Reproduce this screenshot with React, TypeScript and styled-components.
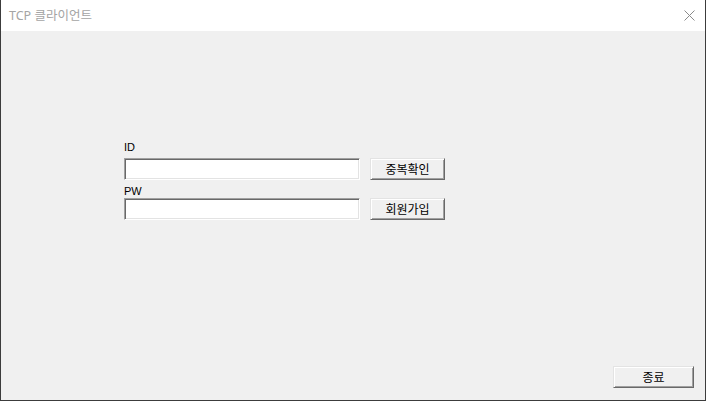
import React from "react";
import styled, { createGlobalStyle } from "styled-components";

const Global = createGlobalStyle`
  html, body { margin: 0; padding: 0; background: #f0f0f0; }
  * { box-sizing: border-box; }
`;

const Window = styled.div`
  width: 706px;
  height: 401px;
  display: flex;
  flex-direction: column;
  border-left: 1px solid #3c3c3c;
  border-right: 1px solid #3c3c3c;
  border-bottom: 1px solid #3c3c3c;
  background: #f0f0f0;
  font-family: "Noto Sans CJK KR", "Noto Sans", sans-serif;
`;

const TitleBar = styled.div`
  height: 31px;
  flex: none;
  background: #ffffff;
  display: flex;
  align-items: center;
  justify-content: space-between;
  padding: 0 10px 0 8px;
`;

const Title = styled.span`
  font-family: "Noto Sans", "Noto Sans CJK KR", sans-serif;
  font-size: 12.5px;
  font-weight: 400;
  color: #a4a4a4;
  line-height: 16px;
`;

const CloseIcon = styled.svg`
  width: 11px;
  height: 11px;
`;

const Client = styled.div`
  flex: 1;
  display: flex;
  flex-direction: column;
  justify-content: space-between;
`;

const Form = styled.div`
  display: grid;
  grid-template-columns: 236px 75px;
  column-gap: 10px;
  padding: 109px 0 0 123px;
`;

const Label = styled.div<{ $shift?: number }>`
  grid-column: 1 / 3;
  height: 16px;
  line-height: 14px;
  padding-top: ${(p) => p.$shift ?? 0}px;
  font-family: "Liberation Sans", "Noto Sans CJK KR", sans-serif;
  font-size: 11px;
  font-weight: 400;
  color: #000;
  margin-bottom: 2px;
`;

const Input = styled.div`
  height: 22px;
  background: #ffffff;
  border-top: 1px solid #a0a0a0;
  border-left: 1px solid #a0a0a0;
  border-right: 1px solid #ffffff;
  border-bottom: 1px solid #ffffff;
  box-shadow: inset 1px 1px 0 #696969, inset -1px -1px 0 #e3e3e3;
`;

const Button = styled.button<{ $w?: number }>`
  width: ${(p) => p.$w ?? 75}px;
  height: 22px;
  margin: 0;
  padding: 0;
  background: #f0f0f0;
  border-top: 1px solid #e3e3e3;
  border-left: 1px solid #e3e3e3;
  border-right: 1px solid #696969;
  border-bottom: 1px solid #696969;
  box-shadow: inset 1px 1px 0 #ffffff, inset -1px -1px 0 #a0a0a0;
  font-family: "Noto Sans CJK KR", sans-serif;
  font-size: 12px;
  font-weight: 400;
  color: #000;
  line-height: 18px;
  display: flex;
  align-items: center;
  justify-content: center;
`;

const Footer = styled.div`
  display: flex;
  justify-content: flex-end;
  padding: 0 11px 12px 0;
`;

export default function App() {
  return (
    <>
      <Global />
      <Window>
        <TitleBar>
          <Title>TCP 클라이언트</Title>
          <CloseIcon viewBox="0 0 11 11">
            <path d="M0.5 0.5 L10.5 10.5 M10.5 0.5 L0.5 10.5" stroke="#8a8a8a" strokeWidth="1" fill="none" />
          </CloseIcon>
        </TitleBar>
        <Client>
          <Form>
            <Label>ID</Label>
            <Input />
            <Button>중복확인</Button>
            <Label $shift={4}>PW</Label>
            <Input />
            <Button>회원가입</Button>
          </Form>
          <Footer>
            <Button $w={81}>종료</Button>
          </Footer>
        </Client>
      </Window>
    </>
  );
}
